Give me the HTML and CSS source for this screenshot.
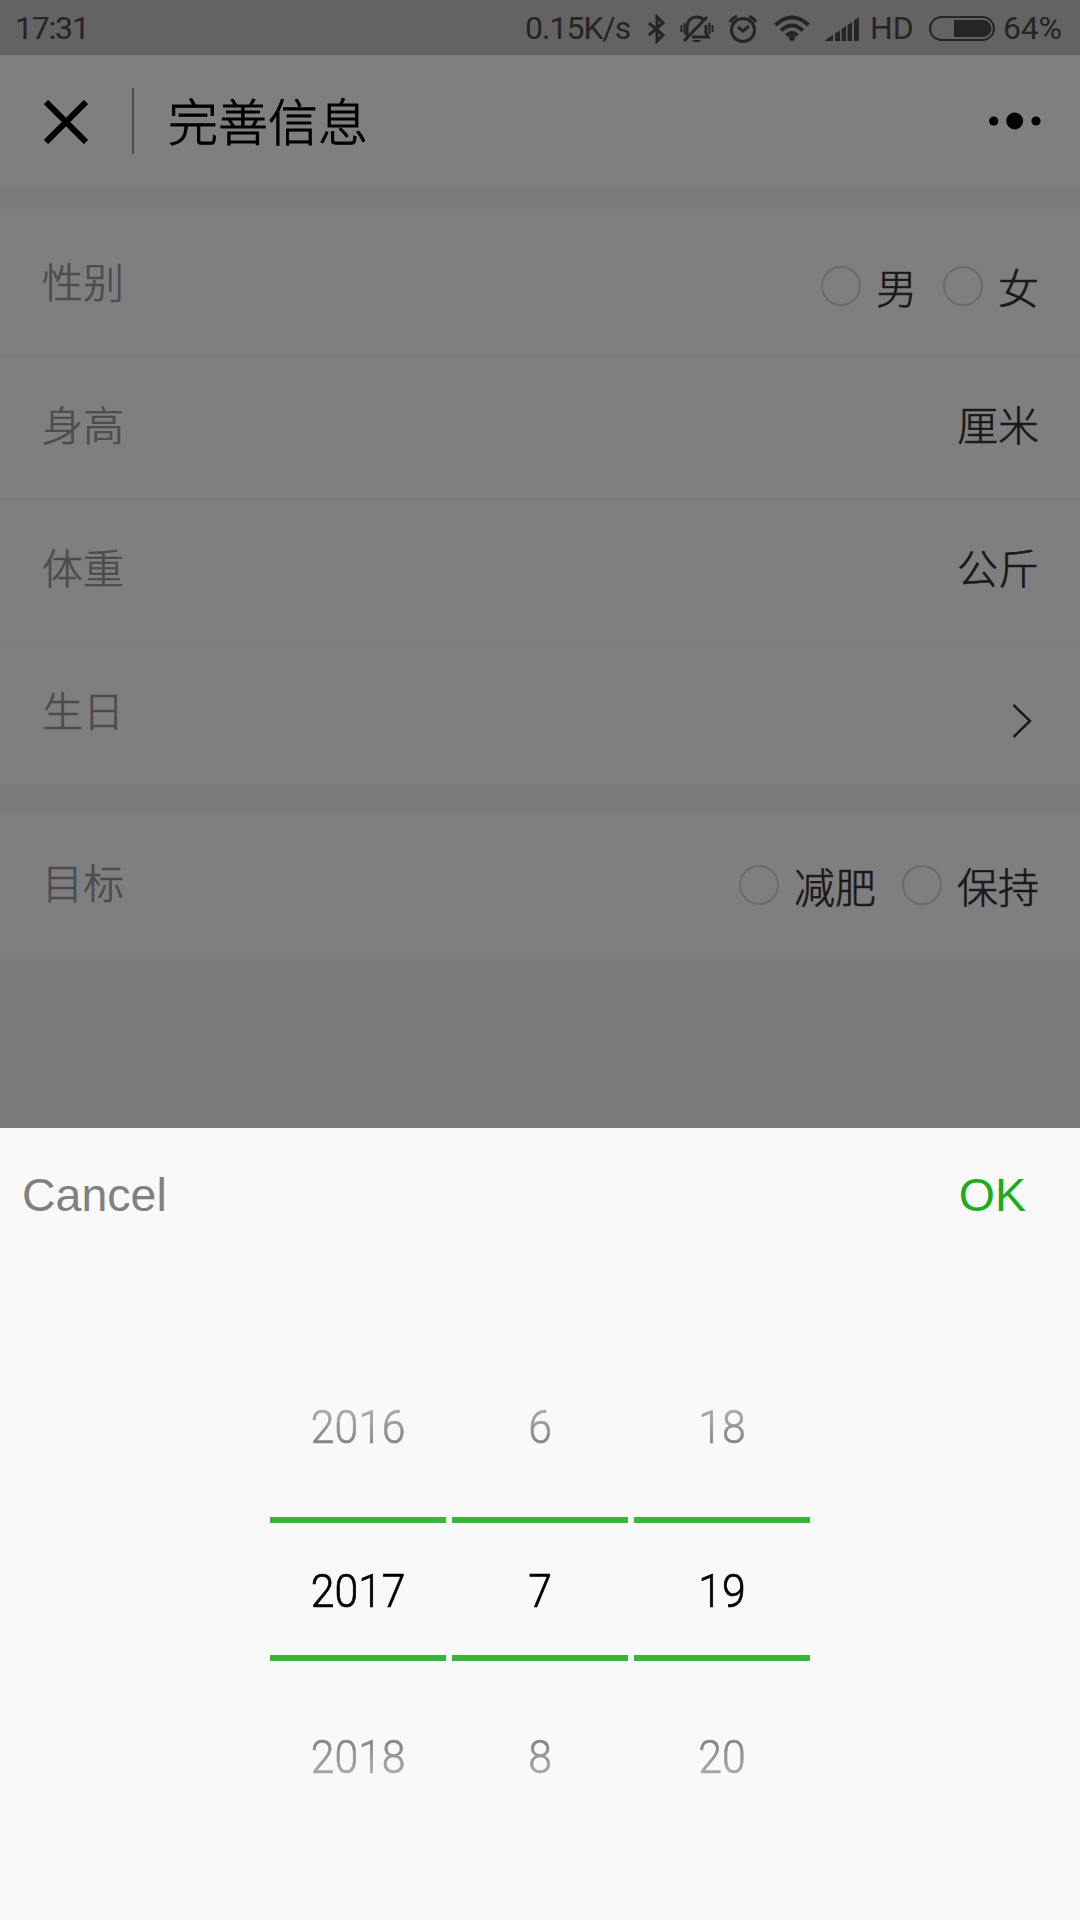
FILE: index.html
```html
<!DOCTYPE html>
<html lang="zh-CN">
<head>
	<meta charset="UTF-8">
	<title>完善信息</title>
	<link rel="stylesheet" href="styles.css">
</head>
<body>
	<div class="page">
		<div class="status">
			<span class="time">17:31</span>
			<span class="speed">0.15K/s</span>
			<svg class="bluetooth" width="20" height="30" viewBox="0 0 20 30"><path d="M2 9 16 21 10 27V3l6 6L2 21"/></svg>
			<svg class="bell" width="34" height="30" viewBox="0 0 34 30">
				<path d="M7 22V13c0-6 4-10 10-10 3 0 5 1 7 3M26 11v8l2 4H12M4 27 27 3"/>
				<path class="thin" d="M4.500 9v11M1.500 11v7M29.500 9v11M32.500 11v7"/>
				<path class="solid" d="M12 26h9c-1 3-8 3-9 0z"/>
			</svg>
			<svg class="alarm" width="30" height="30" viewBox="0 0 30 30">
				<circle cx="15" cy="16" r="11.500"/>
				<path d="M10 13l5 4 6-5M2 8q2-4 7-5.500M28 8q-2-4-7-5.500"/>
			</svg>
			<svg class="wifi" width="36" height="28" viewBox="0 0 36 28">
				<path d="M1.500 10q16.500-15 33 0M7 15.500q11-10 22 0M12.500 20.500q5.500-5 11 0"/>
				<circle class="solid" cx="18" cy="23" r="3"/>
			</svg>
			<svg class="signal" width="34" height="24" viewBox="0 0 34 24">
				<path class="solid" d="M0 24q1-2 8-6v6zM10 16.500l5-3v10.500h-5zM16.500 12l4.500-3v15h-4.500zM22.500 8l4.500-3v19h-4.500zM29 3.500l5-3.500v24h-5z"/>
			</svg>
			<span class="hd">HD</span>
			<svg class="battery" width="66" height="26" viewBox="0 0 66 26">
				<rect class="shell" x="1" y="1" width="64" height="23" rx="11.500"/>
				<path class="solid" d="M25 4h29a8.500 8.500 0 0 1 0 17H25z"/>
			</svg>
			<span class="percent">64%</span>
		</div>

		<div class="header">
			<svg class="close" width="44" height="44" viewBox="0 0 44 44"><path d="M2 2l40 40M42 2L2 42"/></svg>
			<div class="divider"></div>
			<h1>完善信息</h1>
			<svg class="more" width="52" height="18" viewBox="0 0 52 18"><circle cx="4.700" cy="9" r="4.600"/><circle cx="25.700" cy="9" r="8.400"/><circle cx="47" cy="9" r="4.600"/></svg>
		</div>

		<div class="group">
			<div class="row">
				<span class="label">性别</span>
				<div class="choices">
					<span class="radio"></span><span class="choice">男</span>
					<span class="radio"></span><span class="choice">女</span>
				</div>
			</div>
			<div class="row">
				<span class="label">身高</span>
				<span class="unit">厘米</span>
			</div>
			<div class="row">
				<span class="label">体重</span>
				<span class="unit">公斤</span>
			</div>
			<div class="row">
				<span class="label">生日</span>
				<svg class="arrow" width="20" height="36" viewBox="0 0 20 36"><path d="M1.500 2l16.500 16L1.500 34"/></svg>
			</div>
		</div>

		<div class="group goal">
			<div class="row">
				<span class="label">目标</span>
				<div class="choices">
					<span class="radio"></span><span class="choice">减肥</span>
					<span class="radio"></span><span class="choice">保持</span>
				</div>
			</div>
		</div>
	</div>

	<div class="mask"></div>

	<div class="sheet">
		<div class="actions">
			<span class="cancel">Cancel</span>
			<span class="ok">OK</span>
		</div>
		<div class="picker">
			<div class="column">
				<div class="item prev"><span>2016</span></div>
				<div class="item current"><span>2017</span></div>
				<div class="item next"><span>2018</span></div>
			</div>
			<div class="column">
				<div class="item prev"><span>6</span></div>
				<div class="item current"><span>7</span></div>
				<div class="item next"><span>8</span></div>
			</div>
			<div class="column">
				<div class="item prev"><span>18</span></div>
				<div class="item current"><span>19</span></div>
				<div class="item next"><span>20</span></div>
			</div>
		</div>
	</div>
</body>
</html>
```

FILE: styles.css
```css
* {
	box-sizing: border-box;
}

body {
	margin: 0;
	width: 1080px;
	height: 1920px;
	overflow: hidden;
	background: #f8f8f8;
	font-family: "Noto Sans CJK SC", sans-serif;
	font-weight: 300;
}

svg {
	display: block;
	flex: none;
	fill: none;
	stroke: #000;
}

/* status bar */
.status {
	display: flex;
	align-items: center;
	height: 55px;
	padding: 2px 17px 0 15px;
	background: #c6c6c6;
	color: #4a4a4a;
	font: 400 32px/53px Roboto, sans-serif;
	white-space: nowrap;
}

.status svg {
	stroke: #4a4a4a;
	stroke-width: 3;
}

.status .solid {
	fill: #4a4a4a;
	stroke: none;
}

.status .thin,
.status .shell {
	stroke-width: 2;
}

.time {
	letter-spacing: -1.200px;
}

.speed {
	width: 105px;
	margin-left: auto;
	letter-spacing: -1px;
}

.bluetooth {
	margin-left: 17px;
}

.bell {
	margin-left: 13px;
}

.alarm {
	margin-left: 14px;
}

.wifi {
	margin-left: 16px;
}

.wifi path {
	stroke-width: 4;
}

.signal {
	margin-left: 15px;
}

.hd {
	width: 44px;
	margin-left: 11px;
}

.battery {
	margin-left: 15px;
}

.percent {
	width: 60px;
	margin-left: 8px;
	letter-spacing: -0.200px;
}

/* title bar */
.header {
	display: flex;
	align-items: center;
	height: 132px;
	padding: 0 39px 0 44px;
	background: #fff;
}

.close {
	margin-top: 2px;
	stroke-width: 6;
}

.divider {
	width: 2px;
	height: 66px;
	margin-left: 44px;
	background: #999;
}

.header h1 {
	margin: 0 0 4px 34px;
	font-size: 50px;
	font-weight: 300;
	line-height: 70px;
	color: #000;
	-webkit-text-stroke: 0.900px;
}

.more {
	margin-left: auto;
	fill: #000;
	stroke: none;
}

/* form */
.group {
	margin-top: 27px;
	background: #fff;
}

.goal {
	margin-top: 29px;
}

.row {
	display: flex;
	align-items: center;
	justify-content: space-between;
	height: 143px;
	padding: 0 41px 0 42px;
	border-bottom: 2px solid #f6f6f6;
	font-size: 41px;
	line-height: 60px;
	color: #333;
	-webkit-text-stroke: 0.600px;
}

.row:last-child {
	height: 141px;
	border-bottom: 0;
}

.goal .row:last-child {
	height: 140px;
}

.label {
	margin-bottom: 9px;
	color: #999;
}

.goal .label {
	margin-bottom: 5px;
}

.unit {
	margin-bottom: 9px;
}

.choices {
	display: flex;
	align-items: center;
	padding-top: 3px;
}

.radio {
	width: 40px;
	height: 40px;
	border: 2px solid #d6d6d6;
	border-radius: 50%;
}

.choice {
	margin: 0 0 0 15px;
}

.choice + .radio {
	margin-left: 26px;
}

.arrow {
	margin: 14px 7px 0 0;
	stroke: #333;
	stroke-width: 2.500;
}

.mask {
	position: fixed;
	top: 0;
	left: 0;
	width: 100%;
	height: 100%;
	background: rgba(0, 0, 0, 0.5);
}

/* date picker */
.sheet {
	position: fixed;
	left: 0;
	bottom: 0;
	width: 1080px;
	height: 792px;
	background: #f9f9f9;
}

.actions {
	display: flex;
	justify-content: space-between;
	height: 134px;
	padding: 0 54px 0 22px;
	font: 400 46.500px/134px "Liberation Sans", Arial, sans-serif;
}

.cancel {
	color: #808080;
}

.ok {
	color: #1aad19;
}

.picker {
	display: flex;
	justify-content: center;
	gap: 6px;
	margin-top: 73px;
}

.column {
	width: 176px;
}

.item {
	display: flex;
	align-items: center;
	justify-content: center;
	height: 182px;
	padding-top: 2px;
	font: 300 47px/60px Roboto, sans-serif;
	-webkit-text-stroke: 0.700px;
}

.item span {
	transform: scaleX(0.91);
}

.prev span,
.next span {
	color: transparent;
	background: linear-gradient(#b8b8b8, #757575);
	-webkit-background-clip: text;
	background-clip: text;
}

.next {
	padding-top: 10px;
}

.next span {
	background-image: linear-gradient(#757575, #b8b8b8);
}

.item.current {
	height: 144px;
	padding-top: 4px;
	border-top: 6px solid #3ab438;
	border-bottom: 6px solid #3ab438;
	color: #000;
}
```
